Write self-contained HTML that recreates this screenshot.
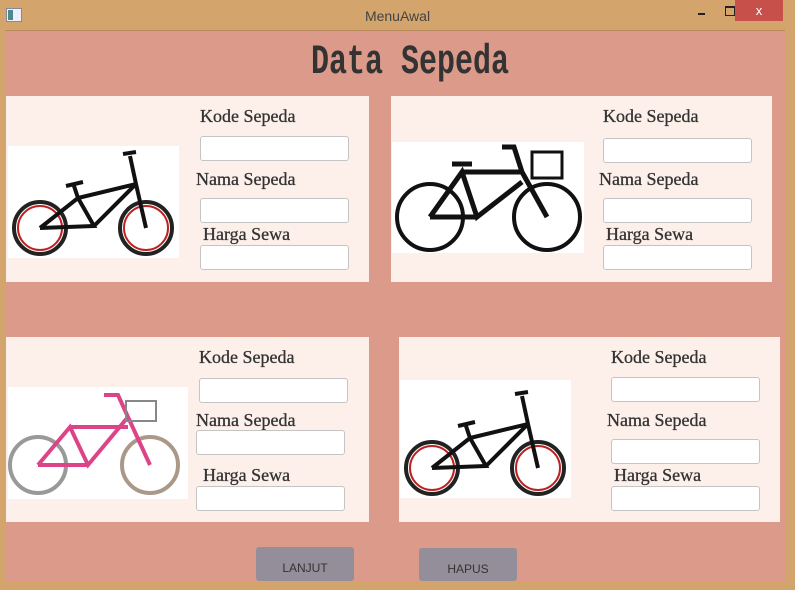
<!DOCTYPE html>
<html><head><meta charset="utf-8"><style>
body{margin:0;width:795px;height:588px;background:#d3a46c;position:relative;overflow:hidden;font-family:"Liberation Serif",serif}
.title{position:absolute;top:0;left:0;width:795px;height:30px;text-align:center;line-height:32px;font-family:"Liberation Sans",sans-serif;font-size:14px;color:#444}
.main{position:absolute;left:5px;top:30px;width:780px;height:551px;background:#dc9a8a;border-top:1px solid #b8875a}
.h{position:absolute;left:311px;top:42px;font-family:"Liberation Mono",monospace;font-weight:bold;font-size:30px;line-height:30px;color:#333;transform:scaleY(1.4);transform-origin:0 0}
.p{position:absolute;background:#fdf0ea}
.l{position:absolute;font-size:18px;font-weight:normal;color:#333;-webkit-text-stroke:0.3px #333}
.i{position:absolute;width:147px;height:23px;background:#fff;border:1px solid #c4c4c4;border-radius:3px}
.img{position:absolute;background:#fff}
.b{position:absolute;background:#948e9a;border-radius:3px;font-family:"Liberation Sans",sans-serif;font-size:12px;color:#333;text-align:center}
.x{position:absolute;left:735px;top:0;width:48px;height:21px;background:#c7504a;color:#fff;text-align:center;line-height:21px;font-family:"Liberation Sans",sans-serif;font-size:13px}
</style></head><body>
<div style="position:absolute;left:6px;top:8px;width:14px;height:12px;background:#eef;border:1px solid #889"><div style="width:5px;height:10px;background:#4a8a8a;margin:1px"></div></div>
<div class="title">MenuAwal</div>
<div style="position:absolute;left:698px;top:13px;width:7px;height:2px;background:#222"></div>
<div style="position:absolute;left:725px;top:6px;width:8px;height:7px;border:1px solid #222;border-top-width:2px"></div>
<div class="x">x</div>
<div class="main"></div>
<div class="h">Data Sepeda</div>

<svg width="0" height="0" style="position:absolute"><defs>
<g id="bmx"><circle cx="32" cy="82" r="26" fill="none" stroke="#222" stroke-width="4"/><circle cx="32" cy="82" r="22" fill="none" stroke="#b22" stroke-width="2"/><circle cx="138" cy="82" r="26" fill="none" stroke="#222" stroke-width="4"/><circle cx="138" cy="82" r="22" fill="none" stroke="#b22" stroke-width="2"/><path d="M32 82 L70 52 L128 38 L138 82 M70 52 L86 80 L32 82 M86 80 L128 38 M128 38 L122 10 M115 8 L128 6 M58 40 L75 36 M66 40 L70 52" stroke="#111" stroke-width="4" fill="none"/></g>
</defs></svg>

<div class="p" style="left:6px;top:96px;width:363px;height:186px"></div>
<div class="img" style="left:8px;top:146px;width:171px;height:112px"><svg width="171" height="112"><use href="#bmx"/></svg></div>
<div class="l" style="left:200px;top:106px">Kode Sepeda</div><div class="i" style="left:200px;top:136px"></div>
<div class="l" style="left:196px;top:169px">Nama Sepeda</div><div class="i" style="left:200px;top:198px"></div>
<div class="l" style="left:203px;top:224px">Harga Sewa</div><div class="i" style="left:200px;top:245px"></div>

<div class="p" style="left:391px;top:96px;width:381px;height:186px"></div>
<div class="img" style="left:392px;top:142px;width:192px;height:111px"><svg width="192" height="111"><circle cx="38" cy="75" r="33" fill="none" stroke="#111" stroke-width="4"/><circle cx="155" cy="75" r="33" fill="none" stroke="#111" stroke-width="4"/><path d="M38 75 L70 30 L85 75 L130 40 M70 30 L130 30 L155 75 M85 75 L38 75 M60 22 L80 22 M130 30 L122 5 L110 5" stroke="#111" stroke-width="5" fill="none"/><rect x="140" y="10" width="30" height="26" fill="none" stroke="#111" stroke-width="3"/></svg></div>
<div class="l" style="left:603px;top:106px">Kode Sepeda</div><div class="i" style="left:603px;top:138px"></div>
<div class="l" style="left:599px;top:169px">Nama Sepeda</div><div class="i" style="left:603px;top:198px"></div>
<div class="l" style="left:606px;top:224px">Harga Sewa</div><div class="i" style="left:603px;top:245px"></div>

<div class="p" style="left:6px;top:337px;width:363px;height:185px"></div>
<div class="img" style="left:8px;top:387px;width:180px;height:112px"><svg width="180" height="112"><circle cx="30" cy="78" r="28" fill="none" stroke="#999" stroke-width="4"/><circle cx="142" cy="78" r="28" fill="none" stroke="#a98" stroke-width="4"/><path d="M30 78 L62 40 L80 78 L120 30 L142 78 M62 40 L120 40 M80 78 L30 78 M120 30 L110 8 L96 8" stroke="#d48" stroke-width="4" fill="none"/><rect x="118" y="14" width="30" height="20" fill="none" stroke="#888" stroke-width="2"/></svg></div>
<div class="l" style="left:199px;top:347px">Kode Sepeda</div><div class="i" style="left:199px;top:378px"></div>
<div class="l" style="left:196px;top:410px">Nama Sepeda</div><div class="i" style="left:196px;top:430px"></div>
<div class="l" style="left:203px;top:465px">Harga Sewa</div><div class="i" style="left:196px;top:486px"></div>

<div class="p" style="left:399px;top:337px;width:381px;height:185px"></div>
<div class="img" style="left:400px;top:380px;width:171px;height:118px"><svg width="171" height="118"><g transform="translate(0,6)"><use href="#bmx"/></g></svg></div>
<div class="l" style="left:611px;top:347px">Kode Sepeda</div><div class="i" style="left:611px;top:377px"></div>
<div class="l" style="left:607px;top:410px">Nama Sepeda</div><div class="i" style="left:611px;top:439px"></div>
<div class="l" style="left:614px;top:465px">Harga Sewa</div><div class="i" style="left:611px;top:486px"></div>

<div class="b" style="left:256px;top:547px;width:98px;height:34px;line-height:42px">LANJUT</div>
<div class="b" style="left:419px;top:548px;width:98px;height:33px;line-height:42px">HAPUS</div>
</body></html>
